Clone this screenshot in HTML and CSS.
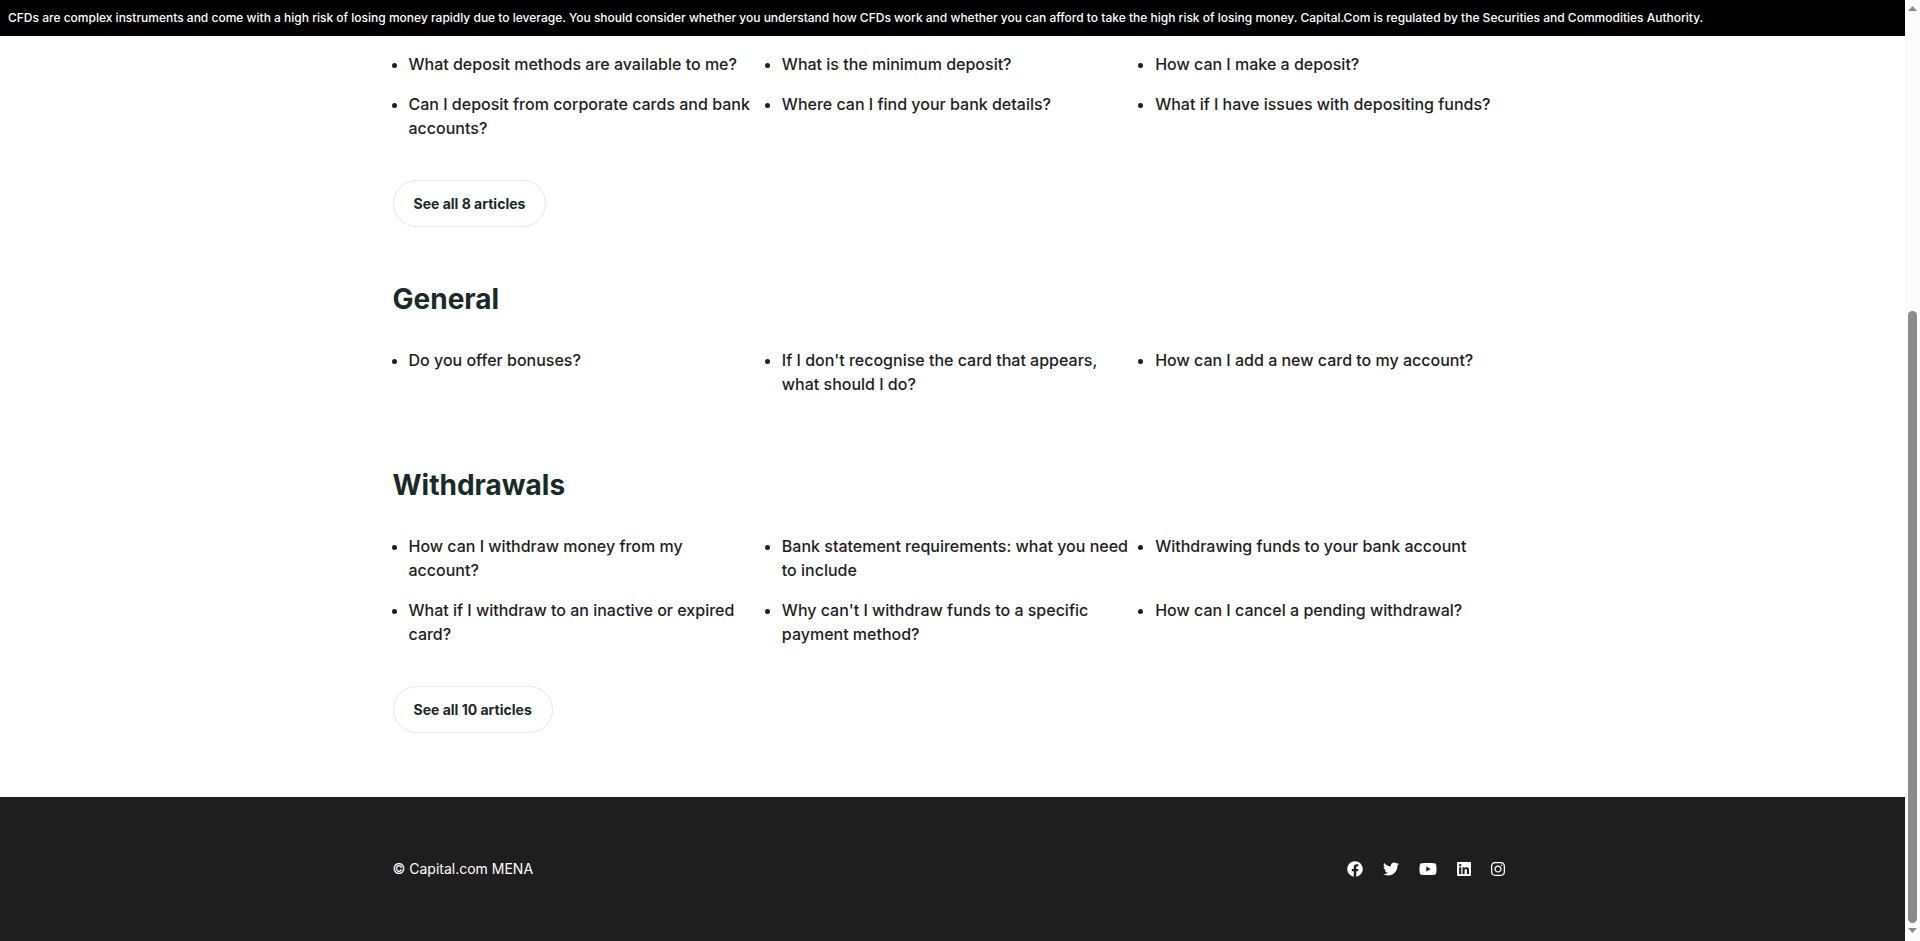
FILE: index.html
```html
<!DOCTYPE html>
<html lang="en">
<head>
<meta charset="utf-8">
<title>Capital.com Help Centre</title>
<link rel="stylesheet" href="styles.css">
</head>
<body>
<div class="page">
  <p class="risk-banner">CFDs are complex instruments and come with a high risk of losing money rapidly due to leverage. You should consider whether you understand how CFDs work and whether you can afford to take the high risk of losing money. Capital.Com is regulated by the Securities and Commodities Authority.</p>
  <main class="container content">
    <section class="topic">
      <ul class="articles">
        <li><a href="#">What deposit methods are available to me?</a></li>
        <li><a href="#">What is the minimum deposit?</a></li>
        <li><a href="#">How can I make a deposit?</a></li>
        <li><a href="#">Can I deposit from corporate cards and bank accounts?</a></li>
        <li><a href="#">Where can I find your bank details?</a></li>
        <li><a href="#">What if I have issues with depositing funds?</a></li>
      </ul>
      <a class="see-all" href="#">See all 8 articles</a>
    </section>
    <section class="topic">
      <h2 class="topic-title">General</h2>
      <ul class="articles">
        <li><a href="#">Do you offer bonuses?</a></li>
        <li><a href="#">If I don't recognise the card that appears, what should I do?</a></li>
        <li><a href="#">How can I add a new card to my account?</a></li>
      </ul>
    </section>
    <section class="topic">
      <h2 class="topic-title">Withdrawals</h2>
      <ul class="articles">
        <li><a href="#">How can I withdraw money from my account?</a></li>
        <li><a href="#">Bank statement requirements: what you need to include</a></li>
        <li><a href="#">Withdrawing funds to your bank account</a></li>
        <li><a href="#">What if I withdraw to an inactive or expired card?</a></li>
        <li><a href="#">Why can't I withdraw funds to a specific payment method?</a></li>
        <li><a href="#">How can I cancel a pending withdrawal?</a></li>
      </ul>
      <a class="see-all" href="#">See all 10 articles</a>
    </section>
  </main>
  <footer class="footer">
    <div class="container footer-row">
      <span>© Capital.com MENA</span>
      <nav class="social" aria-label="Social media">
        <a href="#" aria-label="Facebook"><svg width="16" height="16" viewBox="0 0 512 512"><path d="M504 256C504 119 393 8 256 8S8 119 8 256c0 123.780 90.690 226.380 209.250 245V327.690h-63V256h63v-54.640c0-62.150 37-96.480 93.670-96.480 27.140 0 55.520 4.840 55.520 4.840v61h-31.280c-30.800 0-40.410 19.120-40.410 38.730V256h68.780l-11 71.690h-57.780V501C413.310 482.380 504 379.780 504 256z"/></svg></a>
        <a href="#" aria-label="Twitter"><svg width="16" height="16" viewBox="0 0 512 512"><path d="M459.370 151.716c.325 4.548.325 9.097.325 13.645 0 138.720-105.583 298.558-298.558 298.558-59.452 0-114.680-17.219-161.137-47.106 8.447.974 16.568 1.299 25.340 1.299 49.055 0 94.213-16.568 130.274-44.832-46.132-.975-84.792-31.188-98.112-72.772 6.498.974 12.995 1.624 19.818 1.624 9.421 0 18.843-1.300 27.614-3.573-48.081-9.747-84.143-51.980-84.143-102.985v-1.299c13.969 7.797 30.214 12.670 47.431 13.319-28.264-18.843-46.781-51.005-46.781-87.391 0-19.492 5.197-37.360 14.294-52.954 51.655 63.675 129.300 105.258 216.365 109.807-1.624-7.797-2.599-15.918-2.599-24.040 0-57.828 46.782-104.934 104.934-104.934 30.213 0 57.502 12.670 76.670 33.137 23.715-4.548 46.456-13.320 66.599-25.340-7.798 24.366-24.366 44.833-46.132 57.827 21.117-2.273 41.584-8.122 60.426-16.243-14.292 20.791-32.161 39.308-52.628 54.253z"/></svg></a>
        <a href="#" aria-label="YouTube"><svg width="18" height="16" viewBox="0 0 576 512"><path d="M549.655 124.083c-6.281-23.650-24.787-42.276-48.284-48.597C458.781 64 288 64 288 64S117.220 64 74.629 75.486c-23.497 6.322-42.003 24.947-48.284 48.597-11.412 42.867-11.412 132.305-11.412 132.305s0 89.438 11.412 132.305c6.281 23.650 24.787 41.500 48.284 47.821C117.220 448 288 448 288 448s170.780 0 213.371-11.486c23.497-6.321 42.003-24.171 48.284-47.821 11.412-42.867 11.412-132.305 11.412-132.305s0-89.438-11.412-132.305zm-317.510 213.508V175.185l142.739 81.205-142.739 81.201z"/></svg></a>
        <a href="#" aria-label="LinkedIn"><svg width="14" height="16" viewBox="0 0 448 512"><path d="M416 32H31.900C14.300 32 0 46.500 0 64.300v383.400C0 465.500 14.300 480 31.900 480H416c17.600 0 32-14.500 32-32.300V64.300c0-17.800-14.400-32.300-32-32.300zM135.400 416H69V202.200h66.500V416zm-33.200-243c-21.300 0-38.500-17.300-38.500-38.500S80.900 96 102.200 96c21.200 0 38.500 17.300 38.500 38.500 0 21.300-17.200 38.500-38.500 38.500zm282.100 243h-66.400V312c0-24.800-.5-56.700-34.500-56.700-34.600 0-39.900 27-39.900 54.900V416h-66.400V202.200h63.700v29.200h.9c8.900-16.800 30.600-34.500 62.900-34.500 67.200 0 79.700 44.300 79.700 101.900V416z"/></svg></a>
        <a href="#" aria-label="Instagram"><svg width="14" height="16" viewBox="0 0 448 512"><path d="M224.100 141c-63.600 0-114.900 51.300-114.900 114.900s51.300 114.900 114.900 114.900S339 319.500 339 255.900 287.700 141 224.100 141zm0 189.600c-41.100 0-74.700-33.500-74.700-74.700s33.500-74.700 74.700-74.700 74.700 33.500 74.700 74.700-33.600 74.700-74.700 74.700zm146.400-194.300c0 14.900-12 26.800-26.800 26.800-14.900 0-26.800-12-26.800-26.800s12-26.800 26.800-26.800 26.800 12 26.800 26.800zm76.100 27.200c-1.700-35.900-9.900-67.700-36.200-93.900-26.200-26.200-58-34.400-93.900-36.200-37-2.100-147.900-2.100-184.900 0-35.800 1.700-67.600 9.900-93.900 36.100s-34.400 58-36.200 93.900c-2.100 37-2.100 147.900 0 184.900 1.700 35.900 9.900 67.700 36.200 93.900s58 34.400 93.900 36.200c37 2.100 147.900 2.100 184.900 0 35.900-1.700 67.700-9.900 93.900-36.200 26.200-26.200 34.400-58 36.200-93.900 2.100-37 2.100-147.800 0-184.800zM398.800 388c-7.800 19.600-22.900 34.700-42.600 42.600-29.500 11.700-99.500 9-132.100 9s-102.700 2.600-132.100-9c-19.600-7.800-34.700-22.900-42.600-42.600-11.700-29.500-9-99.500-9-132.100s-2.600-102.700 9-132.100c7.800-19.600 22.900-34.700 42.600-42.600 29.500-11.700 99.500-9 132.100-9s102.700-2.600 132.100 9c19.600 7.800 34.700 22.900 42.600 42.600 11.700 29.500 9 99.500 9 132.100s2.700 102.700-9 132.100z"/></svg></a>
      </nav>
    </div>
  </footer>
</div>
<div class="scrollbar" aria-hidden="true">
  <svg width="9" height="5" viewBox="0 0 9 5"><path d="M0 5 4.500 0 9 5z"/></svg>
  <div class="scroll-track"><div class="scroll-thumb"></div></div>
  <svg width="9" height="5" viewBox="0 0 9 5"><path d="M0 0 4.500 5 9 0z"/></svg>
</div>
</body>
</html>
```
FILE: styles.css
```css
* {
  box-sizing: border-box;
}

body {
  margin: 0;
  min-height: 100vh;
  display: flex;
  background: #fff;
  color: #1e1e1e;
  font-family: Inter, "Liberation Sans", sans-serif;
  font-size: 16px;
  font-weight: 500;
  line-height: 24px;
}

a {
  color: inherit;
  text-decoration: none;
}

.page {
  flex: 1;
  min-width: 0;
  display: flex;
  flex-direction: column;
}

.risk-banner {
  margin: 0;
  padding: 8px;
  background: #000;
  color: #fff;
  font-size: 12px;
  line-height: 20px;
}

.container {
  width: 100%;
  max-width: 1120px;
  margin: 0 auto;
}

.content {
  flex: 1;
  display: flex;
  flex-direction: column;
  gap: 51px;
  padding: 16px 0 64px;
}

.topic-title {
  margin: 0 0 28px;
  color: #192a27;
  font-size: 28px;
  font-weight: 700;
  line-height: 42px;
}

.articles {
  display: grid;
  grid-template-columns: repeat(3, 1fr);
  row-gap: 16px;
  margin: 0 0 17px;
  padding: 0;
}

.articles li {
  margin-left: 16px;
  padding-right: 10px;
}

.see-all {
  display: inline-block;
  margin-top: 23px;
  padding: 12px 20px 11px;
  border: 1px solid #e6e6e6;
  border-radius: 24px;
  color: #192a27;
  font-size: 14px;
  font-weight: 700;
  line-height: 22px;
  vertical-align: top;
}

.footer {
  padding: 60px 0;
  background: #1e1e1e;
  color: #fff;
  font-size: 14px;
  font-weight: 400;
}

.footer-row {
  display: flex;
  align-items: center;
  justify-content: space-between;
}

.social {
  display: flex;
  gap: 20px;
  padding-right: 8px;
}

.social a {
  display: flex;
}

.social svg {
  fill: #fff;
}

.scrollbar {
  width: 15px;
  padding: 6px 3px 8px;
  display: flex;
  flex-direction: column;
  align-items: center;
  gap: 5px;
  background: #fcfcfc;
}

.scrollbar svg {
  fill: #8b8b8b;
}

.scroll-track {
  flex: 1;
  display: grid;
  grid-template-rows: 13fr 27fr;
}

.scroll-thumb {
  grid-row: 2;
  width: 9px;
  border-radius: 5px;
  background: #8b8b8b;
}
```
